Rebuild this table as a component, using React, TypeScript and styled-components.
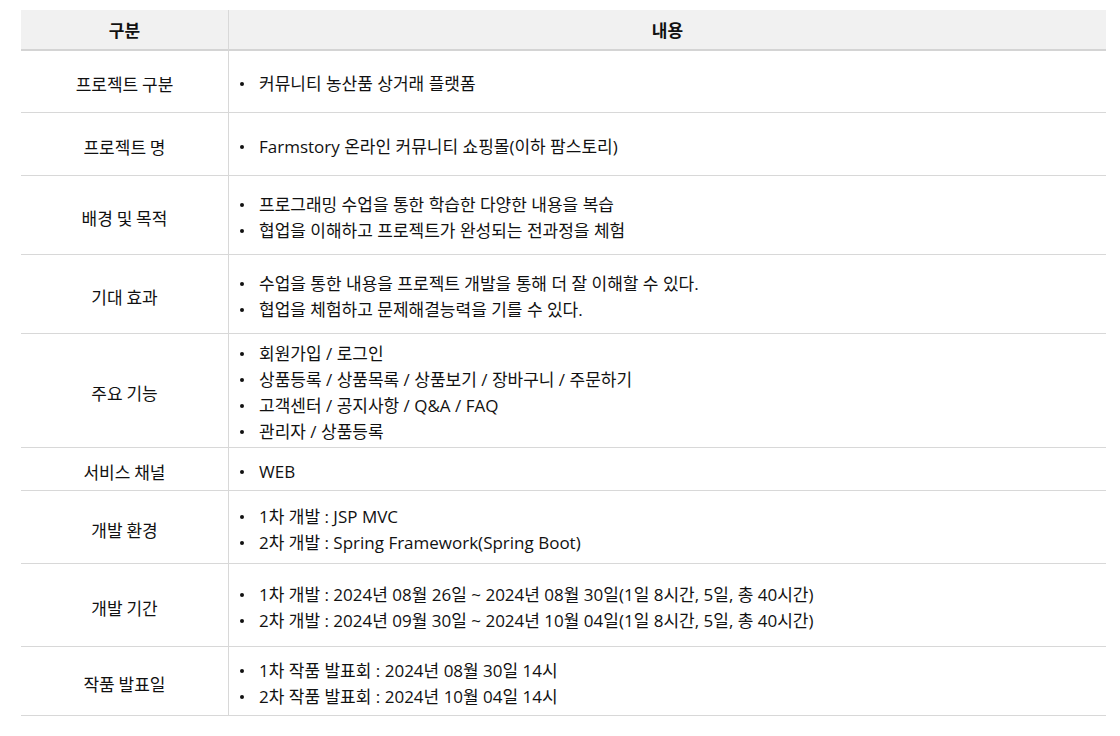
import { createGlobalStyle } from "styled-components";
import styled from "styled-components";

const GlobalStyle = createGlobalStyle`
  body {
    margin: 0;
    background: #ffffff;
    font-family: "Noto Sans CJK KR", "Noto Sans", sans-serif;
    color: #111111;
  }
`;

const Page = styled.div`
  padding: 10px 14px 0 21px;
`;

const Table = styled.div`
  width: 1085px;
  display: grid;
  grid-template-columns: 207px 1fr;
`;

const HeadCell = styled.div<{ $first?: boolean }>`
  height: 39px;
  background: #f1f1f1;
  border-bottom: 2px solid #d4d4d4;
  border-left: ${(p) => (p.$first ? "none" : "1px solid #d8d8d8")};
  display: flex;
  align-items: center;
  justify-content: center;
  font-size: 17px;
  font-weight: 700;
`;

const LabelCell = styled.div<{ $h: number }>`
  height: ${(p) => p.$h}px;
  border-bottom: 1px solid #d8d8d8;
  display: flex;
  align-items: center;
  justify-content: center;
  font-size: 17px;
  box-sizing: border-box;
  padding-top: 4px;
`;

const ContentCell = styled.div<{ $h: number }>`
  height: ${(p) => p.$h}px;
  border-bottom: 1px solid #d8d8d8;
  border-left: 1px solid #d8d8d8;
  display: flex;
  align-items: center;
  box-sizing: border-box;
  padding-left: 10px;
  padding-top: 5px;
`;

const List = styled.ul`
  list-style: none;
  margin: 0;
  padding: 0;
`;

const Item = styled.li`
  position: relative;
  padding-left: 20px;
  font-family: "Open Sans", "Noto Sans CJK KR", sans-serif;
  font-size: 17px;
  line-height: 26px;
  white-space: nowrap;

  &::before {
    content: "";
    position: absolute;
    left: 1px;
    top: 11px;
    width: 4px;
    height: 4px;
    border-radius: 50%;
    background: #111111;
  }
`;

const rows: { label: string; h: number; items: string[] }[] = [
  { label: "프로젝트 구분", h: 62, items: ["커뮤니티 농산품 상거래 플랫폼"] },
  { label: "프로젝트 명", h: 63, items: ["Farmstory 온라인 커뮤니티 쇼핑몰(이하 팜스토리)"] },
  {
    label: "배경 및 목적",
    h: 79,
    items: ["프로그래밍 수업을 통한 학습한 다양한 내용을 복습", "협업을 이해하고 프로젝트가 완성되는 전과정을 체험"],
  },
  {
    label: "기대 효과",
    h: 79,
    items: ["수업을 통한 내용을 프로젝트 개발을 통해 더 잘 이해할 수 있다.", "협업을 체험하고 문제해결능력을 기를 수 있다."],
  },
  {
    label: "주요 기능",
    h: 114,
    items: [
      "회원가입 / 로그인",
      "상품등록 / 상품목록 / 상품보기 / 장바구니 / 주문하기",
      "고객센터 / 공지사항 / Q&A / FAQ",
      "관리자 / 상품등록",
    ],
  },
  { label: "서비스 채널", h: 43, items: ["WEB"] },
  {
    label: "개발 환경",
    h: 73,
    items: ["1차 개발 : JSP MVC", "2차 개발 : Spring Framework(Spring Boot)"],
  },
  {
    label: "개발 기간",
    h: 83,
    items: [
      "1차 개발 : 2024년 08월 26일 ~ 2024년 08월 30일(1일 8시간, 5일, 총 40시간)",
      "2차 개발 : 2024년 09월 30일 ~ 2024년 10월 04일(1일 8시간, 5일, 총 40시간)",
    ],
  },
  {
    label: "작품 발표일",
    h: 69,
    items: ["1차 작품 발표회 : 2024년 08월 30일 14시", "2차 작품 발표회 : 2024년 10월 04일 14시"],
  },
];

export default function App() {
  return (
    <>
      <GlobalStyle />
      <Page>
        <Table>
          <HeadCell $first>구분</HeadCell>
          <HeadCell>내용</HeadCell>
          {rows.map((r) => (
            <>
              <LabelCell key={r.label + "l"} $h={r.h}>
                {r.label}
              </LabelCell>
              <ContentCell key={r.label + "c"} $h={r.h}>
                <List>
                  {r.items.map((it) => (
                    <Item key={it}>{it}</Item>
                  ))}
                </List>
              </ContentCell>
            </>
          ))}
        </Table>
      </Page>
    </>
  );
}
